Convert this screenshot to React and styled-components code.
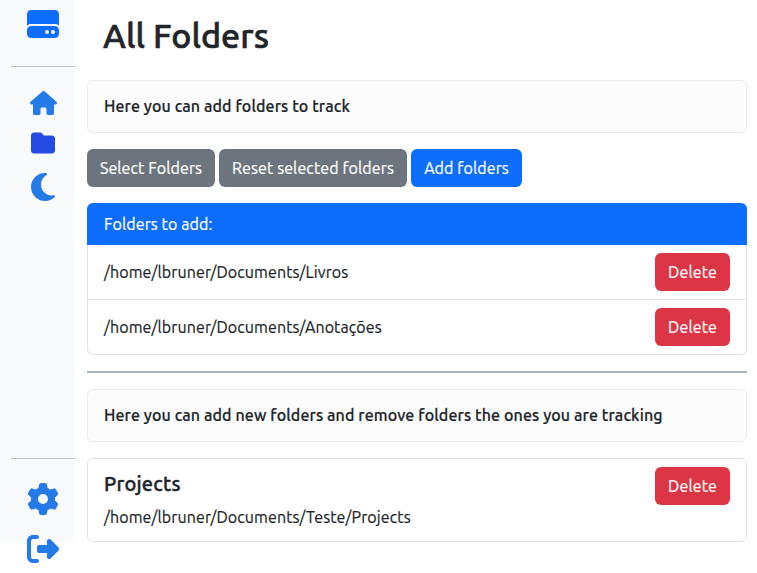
import React from 'react';
import styled, { createGlobalStyle } from 'styled-components';
import { FaHardDrive, FaHouse, FaFolder, FaMoon, FaGear, FaRightFromBracket } from 'react-icons/fa6';

const GlobalStyle = createGlobalStyle`
  *, *::before, *::after { box-sizing: border-box; }
  html, body { margin: 0; overflow: hidden; }
  body {
    background: #fff;
    color: #212529;
    font-family: Ubuntu, "Noto Sans", sans-serif;
    font-size: 16px;
    line-height: 24px;
    letter-spacing: 0.1px;
    -webkit-text-stroke-width: 0.2px;
  }
  h1, h5, h6, p, ul { margin: 0; padding: 0; }
`;

const Layout = styled.div`
  display: flex;
  align-items: flex-start;
  height: 573px;
`;

const Sidebar = styled.nav`
  flex: none;
  display: flex;
  flex-direction: column;
  width: 75px;
  height: 542px;
  padding: 8px 0 0 11px;
  background: #f8fafc;
`;

const Divider = styled.div`
  flex: none;
  height: 1px;
  background: #c1c4c7;
`;

const Brand = styled.a`
  display: flex;
  flex: none;
  justify-content: center;
  height: 58px;
  color: #0d6efd;
`;

const NavGroup = styled.div`
  flex: none;
  display: flex;
  flex-direction: column;
  align-items: center;
  gap: ${({ $gap }) => $gap}px;
  height: ${({ $height }) => $height}px;
  padding-top: 24px;
`;

const NavLink = styled.a`
  display: flex;
  flex: none;
  color: ${({ $active }) => ($active ? '#254be4' : '#247ae6')};

  svg {
    display: block;
    width: ${({ $w }) => $w}px;
    height: ${({ $h }) => $h}px;
  }
`;

const Main = styled.main`
  flex: 1;
  display: flex;
  flex-direction: column;
  gap: 16px;
  padding: 16px 10px 0 12px;
`;

const Title = styled.h1`
  height: 48px;
  padding-left: 16px;
  font-size: 34px;
  font-weight: 500;
  line-height: 39px;
  letter-spacing: 0.03px;
  -webkit-text-stroke-width: 0.6px;
`;

const Notice = styled.div`
  height: 53px;
  padding: 13px 16px;
  border: 1px solid #e9ecef;
  border-radius: 6px;
  background: #fcfcfd;
`;

const NoticeText = styled.h6`
  font-size: 16px;
  font-weight: 500;
  line-height: 25px;
  letter-spacing: 0.11px;
  white-space: nowrap;
`;

const ButtonRow = styled.div`
  display: flex;
  gap: 4px;
`;

const colors = { primary: '#0d6efd', secondary: '#6c757d', danger: '#dc3545' };

const Button = styled.button`
  flex: none;
  width: ${({ $width }) => $width}px;
  height: 38px;
  padding: 0;
  border: 0;
  border-radius: 6px;
  background: ${({ $variant }) => colors[$variant]};
  color: #fff;
  font: inherit;
  letter-spacing: inherit;
  white-space: nowrap;
`;

const List = styled.ul`
  list-style: none;
  border: 1px solid #dee2e6;
  border-top-width: ${({ $headed }) => ($headed ? 0 : 1)}px;
  border-radius: 6px;
`;

const ListHeader = styled.li`
  height: 42px;
  margin: 0 -1px;
  padding: 9px 17px;
  border-radius: 6px 6px 0 0;
  background: #0d6efd;
  color: #fff;
`;

const ListItem = styled.li`
  display: flex;
  justify-content: space-between;
  align-items: flex-start;
  padding: 8px 16px;

  & + & { border-top: 1px solid #dee2e6; }
`;

const Path = styled.p`
  padding-top: 7px;
`;

const Folder = styled.div`
  height: 66px;
`;

const FolderName = styled.h5`
  height: 30px;
  margin-bottom: 9px;
  font-size: 20px;
  font-weight: 500;
  line-height: 34px;
  letter-spacing: 0.2px;
  -webkit-text-stroke-width: 0.4px;
`;

const FolderPath = styled.p`
  line-height: 22px;
`;

const Rule = styled.div`
  height: 2px;
  background: #adb5bd;
`;

const pending = ['/home/lbruner/Documents/Livros', '/home/lbruner/Documents/Anotações'];
const tracked = [{ name: 'Projects', path: '/home/lbruner/Documents/Teste/Projects' }];

export default function App() {
  return (
    <>
      <GlobalStyle />
      <Layout>
        <Sidebar>
          <Brand><FaHardDrive size={32} /></Brand>
          <Divider />
          <NavGroup $height={391} $gap={0}>
            <NavLink $w={27} $h={24}><FaHouse /></NavLink>
            <NavLink $active $w={24} $h={56}><FaFolder /></NavLink>
            <NavLink $w={24} $h={32}><FaMoon /></NavLink>
          </NavGroup>
          <Divider />
          <NavGroup $height={106} $gap={18}>
            <NavLink $w={32} $h={32}><FaGear /></NavLink>
            <NavLink $w={32} $h={32}><FaRightFromBracket /></NavLink>
          </NavGroup>
        </Sidebar>
        <Main>
          <Title>All Folders</Title>
          <Notice><NoticeText>Here you can add folders to track</NoticeText></Notice>
          <ButtonRow>
            <Button $variant="secondary" $width={128}>Select Folders</Button>
            <Button $variant="secondary" $width={188}>Reset selected folders</Button>
            <Button $variant="primary" $width={111}>Add folders</Button>
          </ButtonRow>
          <List $headed>
            <ListHeader>Folders to add:</ListHeader>
            {pending.map((path) => (
              <ListItem key={path}>
                <Path>{path}</Path>
                <Button $variant="danger" $width={75}>Delete</Button>
              </ListItem>
            ))}
          </List>
          <Rule />
          <Notice>
            <NoticeText>
              Here you can add new folders and remove folders the ones you are tracking
            </NoticeText>
          </Notice>
          <List>
            {tracked.map(({ name, path }) => (
              <ListItem key={path}>
                <Folder>
                  <FolderName>{name}</FolderName>
                  <FolderPath>{path}</FolderPath>
                </Folder>
                <Button $variant="danger" $width={75}>Delete</Button>
              </ListItem>
            ))}
          </List>
        </Main>
      </Layout>
    </>
  );
}
